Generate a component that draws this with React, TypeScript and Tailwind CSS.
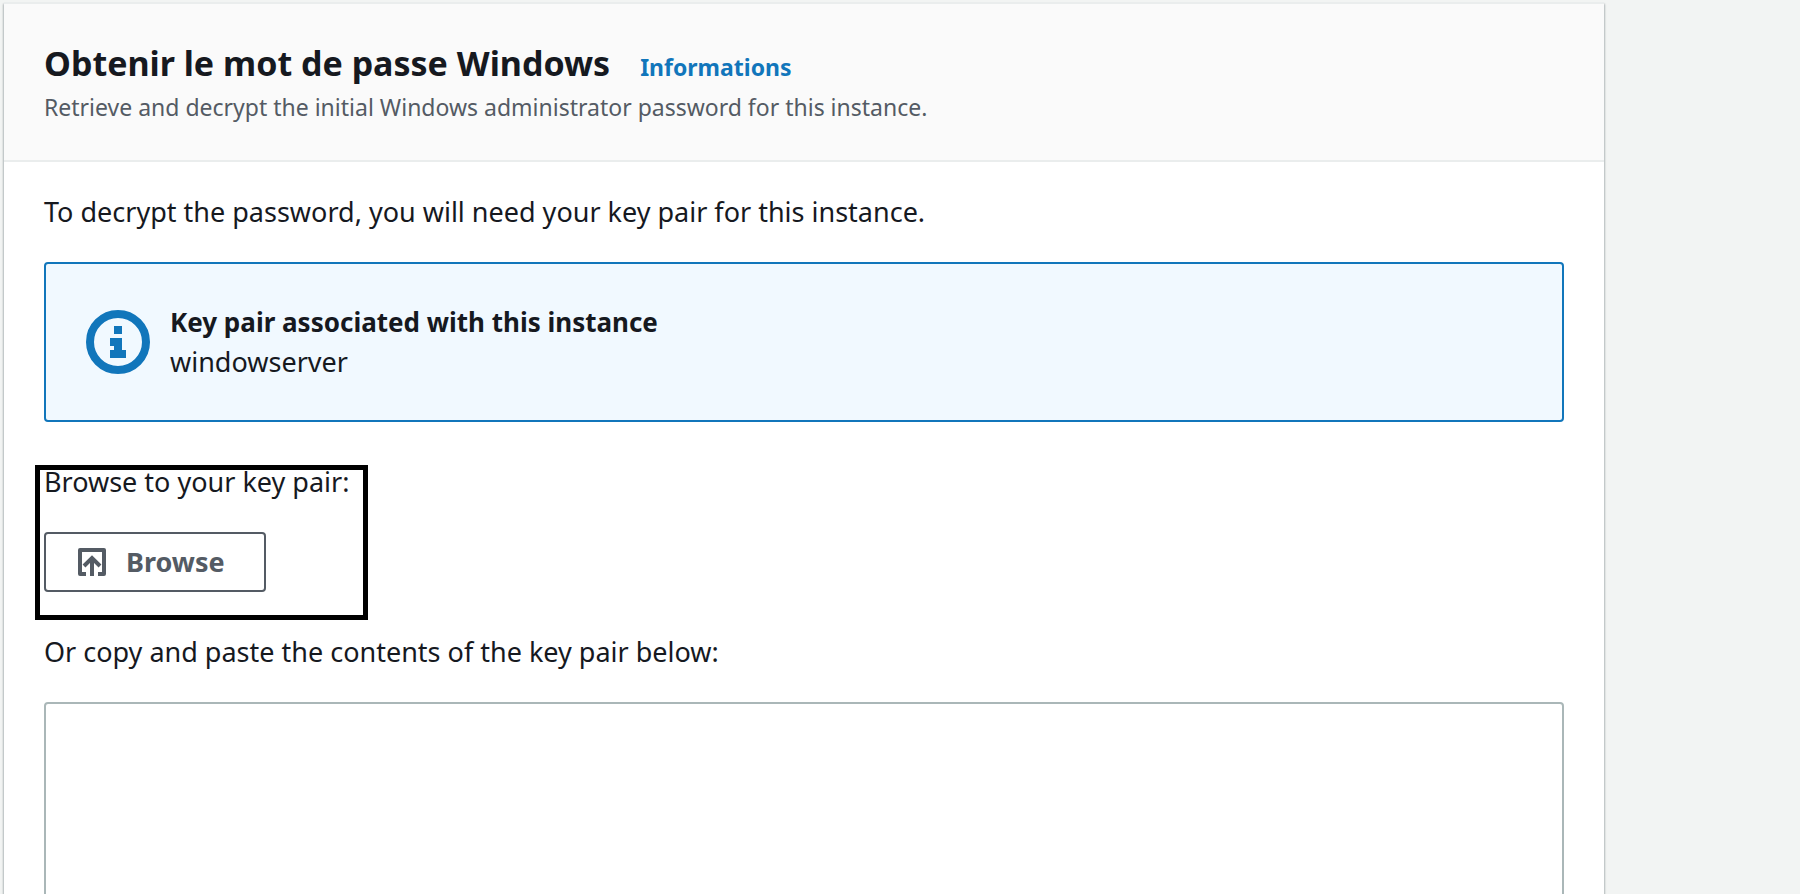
function InfoIcon() {
  return (
    <svg viewBox="0 0 64 64" className="size-16 shrink-0" aria-hidden="true">
      <circle cx="32" cy="32" r="28" fill="none" stroke="#1176bb" strokeWidth="8" />
      <path d="M28 16h8v8h-8zM24 28h12v12h4v8H24v-8h4v-4h-4z" fill="#1176bb" />
    </svg>
  );
}

function UploadIcon() {
  return (
    <svg
      viewBox="0 0 32 32"
      className="size-8 shrink-0"
      fill="none"
      stroke="currentColor"
      strokeWidth="4"
      aria-hidden="true"
    >
      <path d="M10 28H4V4h24v24h-6" strokeLinejoin="round" />
      <path d="M16 30V12M8 20l8-8 8 8" />
    </svg>
  );
}

export default function App() {
  return (
    <div className="h-screen overflow-hidden bg-[#f2f4f3] pt-0.5 pr-[196px] pl-1 font-['Noto_Sans',sans-serif] text-[27px] leading-10 text-[#16191f]">
      <main className="min-h-screen border-t-2 border-[#eaeded] bg-white shadow-[0_2px_2px_0_rgba(0,28,36,0.3),1px_2px_2px_0_rgba(0,28,36,0.15),-1px_2px_2px_0_rgba(0,28,36,0.15)]">
        <header className="border-b-2 border-[#eaeded] bg-[#fafafa] px-10 pt-[35px] pb-[33px]">
          <div className="flex items-baseline gap-[30px]">
            <h1 className="text-[34px] leading-[48px] font-bold">Obtenir le mot de passe Windows</h1>
            <a href="#informations" className="text-[23px] font-bold text-[#1176bb]">
              Informations
            </a>
          </div>
          <p className="text-[23px] text-[#545b64]">
            Retrieve and decrypt the initial Windows administrator password for this instance.
          </p>
        </header>

        <div className="flex flex-col gap-10 px-10 pt-[30px]">
          <section className="flex flex-col gap-[30px]">
            <p>To decrypt the password, you will need your key pair for this instance.</p>
            <div className="flex items-center gap-5 rounded border-2 border-[#1176bb] bg-[#f1f9ff] px-10 py-[38px]">
              <InfoIcon />
              <div>
                <h2 className="text-[26px] font-bold">Key pair associated with this instance</h2>
                <p>windowserver</p>
              </div>
            </div>
          </section>

          <section className="relative flex flex-col items-start gap-[30px]">
            <p id="browse-label">Browse to your key pair:</p>
            <button
              type="button"
              aria-describedby="browse-label"
              className="flex h-[60px] w-[222px] items-center gap-[18px] rounded border-2 border-[#545b64] bg-white pl-[30px] font-bold text-[#545b64]"
            >
              <UploadIcon />
              Browse
            </button>
            <div className="pointer-events-none absolute top-[3px] -left-[9px] h-[155px] w-[333px] border-5 border-black" />
          </section>

          <section className="flex flex-col gap-[30px]">
            <label htmlFor="key-contents">Or copy and paste the contents of the key pair below:</label>
            <textarea
              id="key-contents"
              rows={8}
              className="resize-none rounded border-2 border-[#aab7b8] bg-white px-5 py-2 outline-none"
            />
          </section>
        </div>
      </main>
    </div>
  );
}
